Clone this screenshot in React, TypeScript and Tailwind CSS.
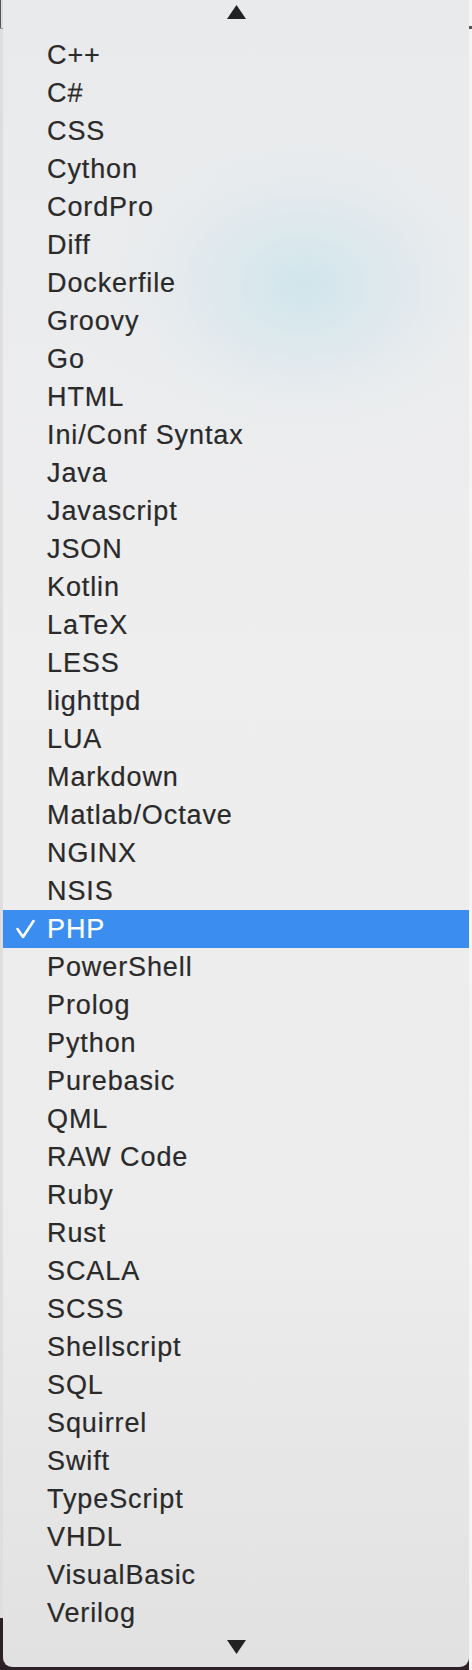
import React from 'react';

const languages = [
    'C++', 'C#', 'CSS', 'Cython', 'CordPro', 'Diff', 'Dockerfile', 'Groovy', 'Go', 'HTML',
    'Ini/Conf Syntax', 'Java', 'Javascript', 'JSON', 'Kotlin', 'LaTeX', 'LESS', 'lighttpd', 'LUA',
    'Markdown', 'Matlab/Octave', 'NGINX', 'NSIS', 'PHP', 'PowerShell', 'Prolog', 'Python',
    'Purebasic', 'QML', 'RAW Code', 'Ruby', 'Rust', 'SCALA', 'SCSS', 'Shellscript', 'SQL',
    'Squirrel', 'Swift', 'TypeScript', 'VHDL', 'VisualBasic', 'Verilog',
];

const selected = 'PHP';

function Arrow({ up }: { up?: boolean }) {
    return (
        <svg width="19" height="14" viewBox="0 0 19 14" className="block">
            {up ? <polygon points="9.5,0 19,14 0,14" fill="#222" /> : <polygon points="0,0 19,0 9.5,14" fill="#222" />}
        </svg>
    );
}

function Check() {
    return (
        <svg width="19" height="20" viewBox="0 0 19 20" className="block">
            <polyline points="1.5,10 7,18 17.5,2" fill="none" stroke="#fff" strokeWidth="2.6" strokeLinecap="round" strokeLinejoin="round" />
        </svg>
    );
}

export default function App() {
    return (
        <div className="w-[472px] h-[1670px] flex bg-[linear-gradient(to_bottom,#dedede_0px,#dedede_1618px,#2b2127_1618px)] overflow-hidden">
            {/* left strip of the window behind */}
            <div className="w-[3px] shrink-0 flex flex-col">
                <div className="h-[28px] border-l border-[#555]" />
                <div className="h-px bg-[#999]" />
                <div className="flex-1" />
            </div>

            {/* menu panel */}
            <div
                className="w-[466px] h-[1667px] shrink-0 rounded-b-[9px] overflow-hidden flex flex-col bg-[radial-gradient(ellipse_230px_175px_at_300px_285px,rgba(206,229,236,0.9)_0%,rgba(214,231,237,0.65)_35%,rgba(226,234,238,0.3)_65%,rgba(236,237,238,0)_100%),linear-gradient(to_bottom,#e9eaec_0%,#eeeeef_40%,#ececec_75%,#e2e1e1_100%)]"
                style={{ fontFamily: '"Liberation Sans", Arial, sans-serif' }}
            >
                <div className="h-[36px] flex justify-center pt-[5px]">
                    <Arrow up />
                </div>
                {languages.map(name => {
                    const active = name === selected;
                    return (
                        <div
                            key={name}
                            className={`h-[38px] flex items-center shrink-0 ${active ? 'bg-[#3b8ef0] text-white' : 'text-[#2a2a2a]'}`}
                        >
                            <div className="w-[44px] pl-[13px] flex items-center">{active && <Check />}</div>
                            <span className="text-[27px] leading-none tracking-[0.9px] [-webkit-text-stroke:0.2px_currentColor]">{name}</span>
                        </div>
                    );
                })}
                <div className="flex justify-center pt-[8px]">
                    <Arrow />
                </div>
            </div>

            {/* right strip */}
            <div className="w-[3px] shrink-0 bg-[#f4f4f4] flex flex-col">
                <div className="h-[26px]" />
                <div className="h-[3px] bg-[#555]" />
            </div>
        </div>
    );
}
